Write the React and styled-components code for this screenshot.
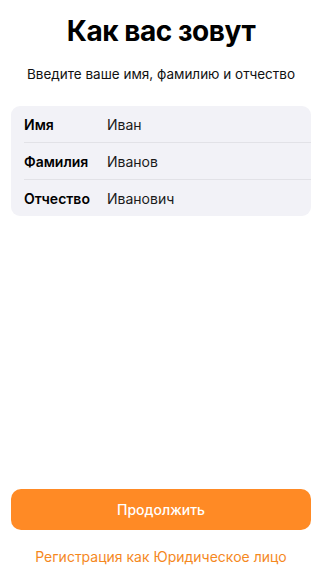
import React from "react";
import styled, { createGlobalStyle } from "styled-components";

const Global = createGlobalStyle`
  html, body { margin: 0; padding: 0; background: #ffffff; }
  body { font-family: Inter, "Noto Sans", "Liberation Sans", sans-serif; -webkit-font-smoothing: antialiased; }
`;

const Page = styled.div`
  height: 576px;
  display: flex;
  flex-direction: column;
  padding: 0 13px 0 11px;
  box-sizing: border-box;
`;

const Title = styled.h1`
  margin: 14px 0 0;
  text-align: center;
  font-size: 28px;
  line-height: 34px;
  font-weight: 700;
  color: #000;
  letter-spacing: -0.45px;
`;

const Subtitle = styled.p`
  margin: 17px 0 0;
  text-align: center;
  font-size: 13.5px;
  line-height: 18px;
  color: #111;
`;

const Card = styled.div`
  margin-top: 23px;
  background: #f2f2f7;
  border-radius: 9px;
  padding-left: 13px;
`;

const Row = styled.div`
  display: flex;
  align-items: center;
  height: 36px;
  border-bottom: ${(p) => (p.$last ? "none" : "1px solid #e2e2e7")};
  font-size: 14px;
`;

const Label = styled.span`
  width: 83px;
  font-weight: 600;
  color: #000;
`;

const Value = styled.span`
  color: #1a1a1a;
`;

const Spacer = styled.div`
  flex: 1;
`;

const Button = styled.button`
  height: 41px;
  border: none;
  border-radius: 10px;
  background: #ff8a25;
  color: #fff;
  font-family: inherit;
  font-size: 14px;
  font-weight: 500;
`;

const Link = styled.a`
  margin: 18px 0 10px;
  text-align: center;
  color: #f5881e;
  font-size: 14px;
  line-height: 18px;
`;

export default function App() {
  const rows = [
    ["Имя", "Иван"],
    ["Фамилия", "Иванов"],
    ["Отчество", "Иванович"],
  ];
  return (
    <>
      <Global />
      <Page>
        <Title>Как вас зовут</Title>
        <Subtitle>Введите ваше имя, фамилию и отчество</Subtitle>
        <Card>
          {rows.map(([l, v], i) => (
            <Row key={l} $last={i === rows.length - 1}>
              <Label>{l}</Label>
              <Value>{v}</Value>
            </Row>
          ))}
        </Card>
        <Spacer />
        <Button>Продолжить</Button>
        <Link>Регистрация как Юридическое лицо</Link>
      </Page>
    </>
  );
}
